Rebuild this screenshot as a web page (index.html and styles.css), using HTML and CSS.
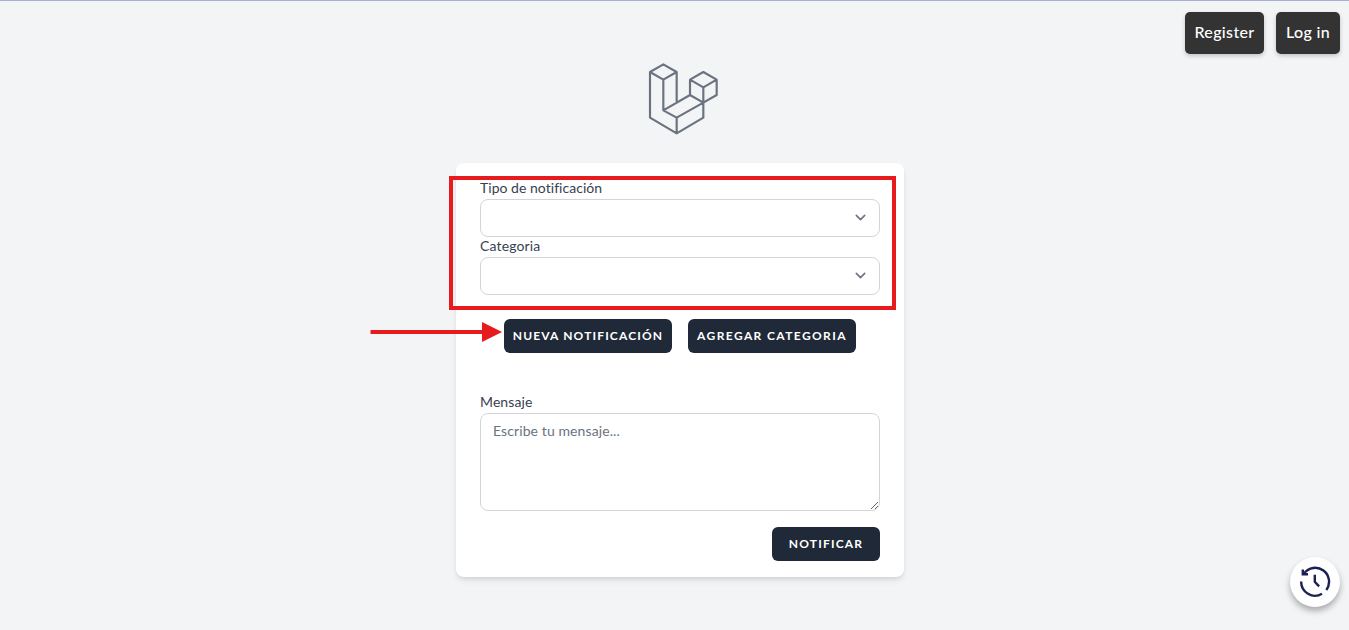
FILE: index.html
```html
<!DOCTYPE html>
<html lang="es">
<head>
<meta charset="utf-8">
<title>Notificaciones</title>
<link rel="stylesheet" href="styles.css">
</head>
<body>
<nav class="nav">
  <a class="nav-link register">Register</a>
  <a class="nav-link login">Log in</a>
</nav>
<main class="page">
  <svg class="logo" viewBox="15 15 240 240" fill="none" stroke="#6b7280" stroke-width="6.5" stroke-linejoin="round">
    <path d="M45 51 85 28 125 51 85 74ZM45 51V188L125 235 205 188V143M85 74V166L125 188V235M125 51V143M85 166 165 120 205 143 125 188M165 74 205 51 245 74 205 97ZM165 74V120M205 97V143L245 120V74"/>
  </svg>
  <form class="card">
    <label class="label tipo"><span>Tipo de notificación</span></label>
    <div class="select"><svg viewBox="0 0 20 20" class="chevron"><path d="M6 8l4 4 4-4"/></svg></div>
    <label class="label cat"><span>Categoria</span></label>
    <div class="select"><svg viewBox="0 0 20 20" class="chevron"><path d="M6 8l4 4 4-4"/></svg></div>
    <div class="actions">
      <button type="button" class="btn wide nueva">Nueva notificación</button>
      <button type="button" class="btn wide agregar">Agregar categoria</button>
    </div>
    <label class="label msg"><span>Mensaje</span></label>
    <textarea class="message" placeholder="Escribe tu mensaje..."></textarea>
    <button type="button" class="btn submit">Notificar</button>
  </form>
</main>
<div class="highlight"></div>
<svg class="arrow" viewBox="0 0 132 20" fill="#e71a1d"><path d="M.5 8H112V0L132 10 112 20V12H.5Z"/></svg>
<button class="history" aria-label="Historial">
  <svg viewBox="0 0 32 32" fill="none" stroke="#1b2150" stroke-width="2.4">
    <path d="M2.2 15.5A13.8 13.8 0 0 0 23 27.8M27.3 24A13.8 13.8 0 0 0 5 7.4"/>
    <path d="M3.8 3.6V8.2H9"/>
    <path d="M15.8 8.8V15.8L20.1 20.4"/>
  </svg>
</button>
</body>
</html>
```
FILE: styles.css
```css
* { box-sizing: border-box; }
body {
  margin: 0;
  height: 630px;
  overflow: hidden;
  background: #f3f4f6;
  border-top: 1px solid #a5b0d3;
  font-family: Lato, "Open Sans", sans-serif;
}
.nav {
  position: absolute;
  top: 12px;
  right: 9px;
  display: flex;
  gap: 12px;
}
.nav-link {
  height: 42px;
  border-radius: 5px;
  background: #333;
  color: #fff;
  font-size: 16px;
  font-weight: 500;
  line-height: 40px;
  text-align: center;
  white-space: nowrap;
  box-shadow: 0 2px 4px rgba(0, 0, 0, .2);
}
.register { width: 79px; letter-spacing: .35px; }
.login { width: 64px; letter-spacing: .3px; }
.page {
  display: flex;
  flex-direction: column;
  align-items: center;
  padding: 59px 0 0 11px;
}
.logo { width: 80px; height: 80px; }
.card {
  display: flex;
  flex-direction: column;
  width: 448px;
  height: 414px;
  margin-top: 23px;
  padding: 16px 24px;
  border-radius: 8px;
  background: #fff;
  box-shadow: 0 4px 6px -1px rgba(0, 0, 0, .1), 0 2px 4px -2px rgba(0, 0, 0, .1);
}
.label {
  height: 20px;
  color: #374151;
  font-size: 14px;
  line-height: 17px;
}
.tipo { letter-spacing: .03px; }
.cat { letter-spacing: .15px; }
.msg { letter-spacing: .1px; }
.select {
  display: flex;
  align-items: center;
  justify-content: flex-end;
  height: 38px;
  padding: 0 8px 2px 0;
  border: 1px solid #d1d5db;
  border-radius: 8px;
}
.chevron {
  width: 21px;
  height: 21px;
  fill: none;
  stroke: #6b7280;
  stroke-width: 1.5;
  stroke-linecap: round;
  stroke-linejoin: round;
}
.actions {
  display: flex;
  justify-content: center;
  gap: 16px;
  margin: 24px 0 40px;
}
.btn {
  height: 34px;
  padding: 0;
  border: 0;
  border-radius: 6px;
  background: #1f2937;
  color: #fff;
  font: 700 12px/34px Lato, sans-serif;
  letter-spacing: 1.2px;
  text-transform: uppercase;
  white-space: nowrap;
}
.wide { width: 168px; }
.nueva { letter-spacing: 1.15px; }
.agregar { letter-spacing: 1.39px; }
.message {
  display: block;
  width: 400px;
  height: 98px;
  padding: 7px 12px;
  border: 1px solid #d1d5db;
  border-radius: 8px;
  background: #fff;
  font: 14px/20px Lato, sans-serif;
  letter-spacing: .1px;
  resize: both;
}
.message::placeholder { color: #6b7280; }
.submit { align-self: flex-end; width: 108px; margin-top: 16px; }
.highlight {
  position: absolute;
  left: 449px;
  top: 176px;
  width: 447px;
  height: 134px;
  border: 4px solid #e71a1d;
}
.arrow {
  position: absolute;
  left: 370px;
  top: 322px;
  width: 132px;
  height: 20px;
}
.history {
  position: absolute;
  left: 1290px;
  top: 557px;
  width: 50px;
  height: 50px;
  padding: 9px;
  border: 0;
  border-radius: 50%;
  background: #fff;
  box-shadow: 0 4px 6px rgba(0, 0, 0, .3);
}
.history svg { display: block; width: 32px; height: 32px; }
```
